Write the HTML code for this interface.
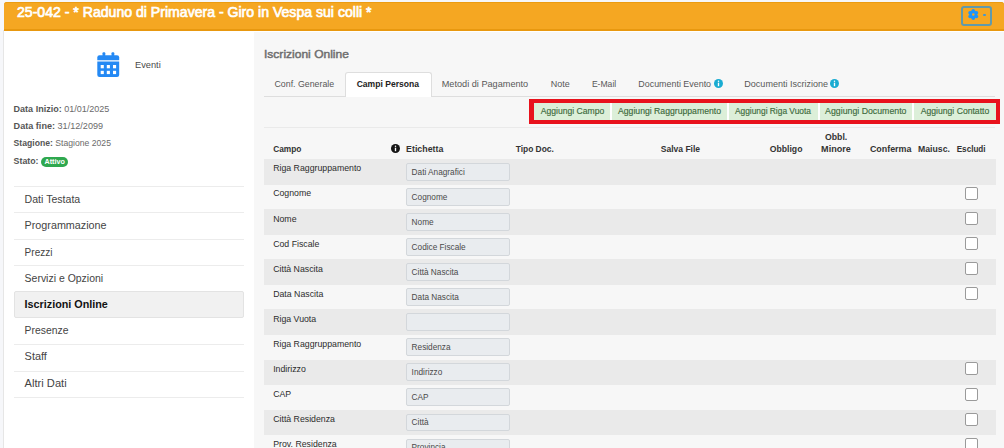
<!DOCTYPE html>
<html><head><meta charset="utf-8"><title>Iscrizioni Online</title>
<style>
html,body{margin:0;padding:0;}
body{width:1004px;height:448px;overflow:hidden;position:relative;background:#f6f7fa;font-family:"Liberation Sans",sans-serif;}
.t{position:absolute;white-space:nowrap;line-height:1;}
b{font-weight:bold;}
</style></head><body>
<div style="position:absolute;left:4px;top:2px;width:1000px;height:28px;background:#f5a722;border-radius:3px 3px 0 0;box-shadow:inset 0 1px 0 #eb9c12;"></div>
<div style="position:absolute;left:4px;top:29px;width:1000px;height:1.5px;background:#e8980f;"></div>
<div style="position:absolute;left:3px;top:30px;width:1px;height:418px;background:#e6e6e6;"></div>
<div style="position:absolute;left:4px;top:30.5px;width:250px;height:418px;background:#fff;"></div>
<div style="position:absolute;left:254px;top:30.5px;width:750px;height:2px;background:#fff;"></div>
<div style="position:absolute;left:254px;top:32px;width:750px;height:416px;background:#f7f7f7;"></div>
<div class="t" style="left:16.60px;top:5.00px;font-size:14.30px;color:#fff;-webkit-text-stroke:0.7px #fff;transform:scaleX(0.9849);transform-origin:0 0;">25-042 - * Raduno di Primavera - Giro in Vespa sui colli *</div>
<div style="position:absolute;left:961px;top:6px;width:31px;height:20px;border:2px solid #609aab;border-radius:3px;box-sizing:border-box"></div>
<svg style="position:absolute;left:966px;top:8px" width="16" height="14" viewBox="0 0 16 14">
<g transform="translate(7.25,6.5)" fill="#2095f8">
<circle r="4"/>
<circle cx="0" cy="-3.75" r="1.75"/>
<circle cx="0" cy="3.75" r="1.75"/>
<circle cx="3.25" cy="-1.875" r="1.75"/>
<circle cx="-3.25" cy="-1.875" r="1.75"/>
<circle cx="3.25" cy="1.875" r="1.75"/>
<circle cx="-3.25" cy="1.875" r="1.75"/>
</g>
<circle cx="7.25" cy="6.5" r="1.25" fill="#f5a722"/>
</svg>
<div style="position:absolute;left:983px;top:13.5px;width:3px;height:2px;background:#3d97da;border-radius:1.5px"></div>
<svg style="position:absolute;left:97px;top:52px" width="23" height="26" viewBox="0 0 23 26">
<g fill="#2489f4">
<rect x="5.5" y="0.2" width="2.8" height="4" rx="1"/>
<rect x="14.5" y="0.2" width="2.8" height="4" rx="1"/>
<path d="M0.3 5.5 Q0.3 3.2 2.5 3.2 H20 Q22.2 3.2 22.2 5.5 V8.2 H0.3 Z"/>
<path d="M0.3 9.4 H22.2 V23 Q22.2 25 20 25 H2.5 Q0.3 25 0.3 23 Z"/>
</g>
<g fill="#fff">
<rect x="3.7" y="13" width="3.1" height="3.3"/>
<rect x="9.8" y="13" width="3.1" height="3.3"/>
<rect x="16" y="13" width="3.1" height="3.3"/>
<rect x="3.7" y="18.8" width="3.1" height="3.3"/>
<rect x="9.8" y="18.8" width="3.1" height="3.3"/>
<rect x="16" y="18.8" width="3.1" height="3.3"/>
</g>
</svg>
<div class="t" style="left:135.00px;top:61.00px;font-size:9.28px;color:#4a4a4a;">Eventi</div>
<div class="t" style="left:13.60px;top:105.01px;font-size:9.03px;color:#6b6b6b"><b style="color:#555">Data Inizio: </b>01/01/2025</div>
<div class="t" style="left:13.60px;top:122.01px;font-size:9.10px;color:#6b6b6b"><b style="color:#555">Data fine: </b>31/12/2099</div>
<div class="t" style="left:13.60px;top:139.00px;font-size:8.64px;color:#6b6b6b"><b style="color:#555">Stagione: </b>Stagione 2025</div>
<div class="t" style="left:13.60px;top:157.00px;font-size:8.79px;color:#555;font-weight:bold;">Stato:</div>
<div style="position:absolute;left:41px;top:157.4px;width:26.8px;height:9.4px;background:#2fa84f;border-radius:5px;"></div>
<div class="t" style="left:44.50px;top:159.00px;font-size:7.17px;color:#fff;font-weight:bold;">Attivo</div>
<div style="position:absolute;left:14px;top:185.5px;width:230px;height:1px;background:#ececec;"></div>
<div style="position:absolute;left:14px;top:211.5px;width:230px;height:1px;background:#ececec;"></div>
<div style="position:absolute;left:14px;top:238.5px;width:230px;height:1px;background:#ececec;"></div>
<div style="position:absolute;left:14px;top:264.5px;width:230px;height:1px;background:#ececec;"></div>
<div style="position:absolute;left:13.5px;top:291px;width:230.5px;height:27px;background:#f1f1f1;border:1px solid #e3e3e3;border-radius:2px;box-sizing:border-box;"></div>
<div style="position:absolute;left:14px;top:343.5px;width:230px;height:1px;background:#ececec;"></div>
<div style="position:absolute;left:14px;top:370.5px;width:230px;height:1px;background:#ececec;"></div>
<div style="position:absolute;left:14px;top:396.5px;width:230px;height:1px;background:#ececec;"></div>
<div class="t" style="left:24.60px;top:194.00px;font-size:10.58px;color:#444;">Dati Testata</div>
<div class="t" style="left:24.60px;top:220.00px;font-size:10.78px;color:#444;">Programmazione</div>
<div class="t" style="left:24.60px;top:248.01px;font-size:10.04px;color:#444;">Prezzi</div>
<div class="t" style="left:24.60px;top:274.01px;font-size:10.47px;color:#444;">Servizi e Opzioni</div>
<div class="t" style="left:24.60px;top:299.01px;font-size:10.79px;color:#111;font-weight:bold;">Iscrizioni Online</div>
<div class="t" style="left:24.60px;top:326.01px;font-size:10.39px;color:#444;">Presenze</div>
<div class="t" style="left:24.60px;top:351.01px;font-size:10.94px;color:#444;">Staff</div>
<div class="t" style="left:24.60px;top:378.00px;font-size:11.14px;color:#444;">Altri Dati</div>
<div class="t" style="left:264.40px;top:49.01px;font-size:11.20px;color:#6e6e6e;-webkit-text-stroke:0.45px #6e6e6e;transform:scaleX(1.0753);transform-origin:0 0;">Iscrizioni Online</div>
<div style="position:absolute;left:264px;top:96px;width:731px;height:1px;background:#dedede;"></div>
<div style="position:absolute;left:345px;top:72px;width:86.5px;height:25px;background:#fff;border:1px solid #dedede;border-bottom:none;border-radius:3px 3px 0 0;box-sizing:border-box;"></div>
<div class="t" style="left:274.50px;top:80.01px;font-size:8.80px;color:#575757;">Conf. Generale</div>
<div class="t" style="left:356.70px;top:80.02px;font-size:8.56px;color:#222;font-weight:bold;">Campi Persona</div>
<div class="t" style="left:441.70px;top:80.01px;font-size:9.17px;color:#575757;">Metodi di Pagamento</div>
<div class="t" style="left:550.70px;top:80.00px;font-size:8.99px;color:#575757;">Note</div>
<div class="t" style="left:591.90px;top:80.02px;font-size:8.58px;color:#575757;">E-Mail</div>
<div class="t" style="left:638.30px;top:80.00px;font-size:8.92px;color:#575757;">Documenti Evento</div>
<div class="t" style="left:744.30px;top:80.01px;font-size:9.04px;color:#575757;">Documenti Iscrizione</div>
<svg style="position:absolute;left:713.70px;top:79.00px" width="9.00" height="9.00" viewBox="-5 -5 10 10">
<circle r="5" fill="#19acd2"/><rect x="-0.75" y="-0.9" width="1.5" height="3.9" fill="#fff"/><circle cy="-2.6" r="0.85" fill="#fff"/></svg>
<svg style="position:absolute;left:830.10px;top:79.10px" width="9.00" height="9.00" viewBox="-5 -5 10 10">
<circle r="5" fill="#19acd2"/><rect x="-0.75" y="-0.9" width="1.5" height="3.9" fill="#fff"/><circle cy="-2.6" r="0.85" fill="#fff"/></svg>
<div style="position:absolute;left:529px;top:99px;width:471px;height:25px;background:#e8121c;"></div>
<div style="position:absolute;left:533.5px;top:103px;width:462px;height:17px;background:#fff;"></div>
<div style="position:absolute;left:534px;top:103px;width:76px;height:17px;background:#dcefd9;"></div>
<div class="t" style="left:540.70px;top:107.01px;font-size:8.60px;color:#3d6a3c;-webkit-text-stroke:0.15px #3d6a3c;">Aggiungi Campo</div>
<div style="position:absolute;left:612px;top:103px;width:115px;height:17px;background:#dcefd9;"></div>
<div class="t" style="left:618.00px;top:107.00px;font-size:8.67px;color:#3d6a3c;-webkit-text-stroke:0.15px #3d6a3c;">Aggiungi Raggruppamento</div>
<div style="position:absolute;left:729px;top:103px;width:89px;height:17px;background:#dcefd9;"></div>
<div class="t" style="left:734.90px;top:107.00px;font-size:8.38px;color:#3d6a3c;-webkit-text-stroke:0.15px #3d6a3c;">Aggiungi Riga Vuota</div>
<div style="position:absolute;left:820px;top:103px;width:92px;height:17px;background:#dcefd9;"></div>
<div class="t" style="left:825.10px;top:107.01px;font-size:8.77px;color:#3d6a3c;-webkit-text-stroke:0.15px #3d6a3c;">Aggiungi Documento</div>
<div style="position:absolute;left:914px;top:103px;width:81.5px;height:17px;background:#dcefd9;"></div>
<div class="t" style="left:920.70px;top:107.00px;font-size:8.65px;color:#3d6a3c;-webkit-text-stroke:0.15px #3d6a3c;">Aggiungi Contatto</div>
<div style="position:absolute;left:264px;top:126.5px;width:731px;height:1px;background:#eaeaea;"></div>
<div class="t" style="left:273.20px;top:145.02px;font-size:8.35px;color:#333;font-weight:bold;">Campo</div>
<div class="t" style="left:406.10px;top:145.00px;font-size:8.83px;color:#333;font-weight:bold;">Etichetta</div>
<div class="t" style="left:515.70px;top:145.02px;font-size:8.41px;color:#333;font-weight:bold;">Tipo Doc.</div>
<div class="t" style="left:660.70px;top:145.00px;font-size:8.56px;color:#333;font-weight:bold;">Salva File</div>
<div class="t" style="left:769.70px;top:145.00px;font-size:8.68px;color:#333;font-weight:bold;">Obbligo</div>
<div class="t" style="left:825.00px;top:133.00px;font-size:8.73px;color:#333;font-weight:bold;">Obbl.</div>
<div class="t" style="left:821.10px;top:145.00px;font-size:9.09px;color:#333;font-weight:bold;">Minore</div>
<div class="t" style="left:869.90px;top:145.01px;font-size:8.91px;color:#333;font-weight:bold;">Conferma</div>
<div class="t" style="left:918.10px;top:145.01px;font-size:8.67px;color:#333;font-weight:bold;">Maiusc.</div>
<div class="t" style="left:956.70px;top:146.01px;font-size:8.15px;color:#333;font-weight:bold;">Escludi</div>
<svg style="position:absolute;left:391.10px;top:143.90px" width="9.00" height="9.00" viewBox="-5 -5 10 10">
<circle r="5" fill="#151515"/><rect x="-0.75" y="-0.9" width="1.5" height="3.9" fill="#fff"/><circle cy="-2.6" r="0.85" fill="#fff"/></svg>
<div style="position:absolute;left:264px;top:159px;width:731.5px;height:26px;background:#eaeaea;"></div>
<div style="position:absolute;left:264px;top:208.6px;width:731.5px;height:26px;background:#eaeaea;"></div>
<div style="position:absolute;left:264px;top:259px;width:731.5px;height:26px;background:#eaeaea;"></div>
<div style="position:absolute;left:264px;top:309px;width:731.5px;height:26px;background:#eaeaea;"></div>
<div style="position:absolute;left:264px;top:359.6px;width:731.5px;height:25px;background:#eaeaea;"></div>
<div style="position:absolute;left:264px;top:410px;width:731.5px;height:25px;background:#eaeaea;"></div>
<div class="t" style="left:273.20px;top:164.01px;font-size:8.75px;color:#2c2c2c">Riga Raggruppamento</div>
<div style="position:absolute;left:406px;top:163.00px;width:103.5px;height:17.5px;background:#e9ecef;border:1px solid #d3d7db;border-radius:2px;box-sizing:border-box"></div>
<div class="t" style="left:411.60px;top:169.01px;font-size:8.25px;color:#4a4a4a">Dati Anagrafici</div>
<div class="t" style="left:273.20px;top:189.01px;font-size:8.75px;color:#2c2c2c">Cognome</div>
<div style="position:absolute;left:406px;top:188.05px;width:103.5px;height:17.5px;background:#e9ecef;border:1px solid #d3d7db;border-radius:2px;box-sizing:border-box"></div>
<div class="t" style="left:411.60px;top:194.01px;font-size:8.25px;color:#4a4a4a">Cognome</div>
<div style="position:absolute;left:965px;top:187.10px;width:13px;height:13px;background:#fff;border:1px solid #9a9a9a;border-radius:2px;box-sizing:border-box"></div>
<div class="t" style="left:273.20px;top:215.01px;font-size:8.75px;color:#2c2c2c">Nome</div>
<div style="position:absolute;left:406px;top:213.10px;width:103.5px;height:17.5px;background:#e9ecef;border:1px solid #d3d7db;border-radius:2px;box-sizing:border-box"></div>
<div class="t" style="left:411.60px;top:219.01px;font-size:8.25px;color:#4a4a4a">Nome</div>
<div style="position:absolute;left:965px;top:212.15px;width:13px;height:13px;background:#fff;border:1px solid #9a9a9a;border-radius:2px;box-sizing:border-box"></div>
<div class="t" style="left:273.20px;top:240.00px;font-size:8.75px;color:#2c2c2c">Cod Fiscale</div>
<div style="position:absolute;left:406px;top:238.15px;width:103.5px;height:17.5px;background:#e9ecef;border:1px solid #d3d7db;border-radius:2px;box-sizing:border-box"></div>
<div class="t" style="left:411.60px;top:244.00px;font-size:8.25px;color:#4a4a4a">Codice Fiscale</div>
<div style="position:absolute;left:965px;top:237.20px;width:13px;height:13px;background:#fff;border:1px solid #9a9a9a;border-radius:2px;box-sizing:border-box"></div>
<div class="t" style="left:273.20px;top:265.01px;font-size:8.75px;color:#2c2c2c">Città Nascita</div>
<div style="position:absolute;left:406px;top:263.20px;width:103.5px;height:17.5px;background:#e9ecef;border:1px solid #d3d7db;border-radius:2px;box-sizing:border-box"></div>
<div class="t" style="left:411.60px;top:269.00px;font-size:8.25px;color:#4a4a4a">Città Nascita</div>
<div style="position:absolute;left:965px;top:262.25px;width:13px;height:13px;background:#fff;border:1px solid #9a9a9a;border-radius:2px;box-sizing:border-box"></div>
<div class="t" style="left:273.20px;top:290.01px;font-size:8.75px;color:#2c2c2c">Data Nascita</div>
<div style="position:absolute;left:406px;top:288.25px;width:103.5px;height:17.5px;background:#e9ecef;border:1px solid #d3d7db;border-radius:2px;box-sizing:border-box"></div>
<div class="t" style="left:411.60px;top:294.01px;font-size:8.25px;color:#4a4a4a">Data Nascita</div>
<div style="position:absolute;left:965px;top:287.30px;width:13px;height:13px;background:#fff;border:1px solid #9a9a9a;border-radius:2px;box-sizing:border-box"></div>
<div class="t" style="left:273.20px;top:315.01px;font-size:8.75px;color:#2c2c2c">Riga Vuota</div>
<div style="position:absolute;left:406px;top:313.30px;width:103.5px;height:17.5px;background:#e9ecef;border:1px solid #d3d7db;border-radius:2px;box-sizing:border-box"></div>
<div class="t" style="left:273.20px;top:340.01px;font-size:8.75px;color:#2c2c2c">Riga Raggruppamento</div>
<div style="position:absolute;left:406px;top:338.35px;width:103.5px;height:17.5px;background:#e9ecef;border:1px solid #d3d7db;border-radius:2px;box-sizing:border-box"></div>
<div class="t" style="left:411.60px;top:344.01px;font-size:8.25px;color:#4a4a4a">Residenza</div>
<div class="t" style="left:273.20px;top:365.00px;font-size:8.75px;color:#2c2c2c">Indirizzo</div>
<div style="position:absolute;left:406px;top:363.40px;width:103.5px;height:17.5px;background:#e9ecef;border:1px solid #d3d7db;border-radius:2px;box-sizing:border-box"></div>
<div class="t" style="left:411.60px;top:369.00px;font-size:8.25px;color:#4a4a4a">Indirizzo</div>
<div style="position:absolute;left:965px;top:362.45px;width:13px;height:13px;background:#fff;border:1px solid #9a9a9a;border-radius:2px;box-sizing:border-box"></div>
<div class="t" style="left:273.20px;top:390.01px;font-size:8.75px;color:#2c2c2c">CAP</div>
<div style="position:absolute;left:406px;top:388.45px;width:103.5px;height:17.5px;background:#e9ecef;border:1px solid #d3d7db;border-radius:2px;box-sizing:border-box"></div>
<div class="t" style="left:411.60px;top:394.00px;font-size:8.25px;color:#4a4a4a">CAP</div>
<div style="position:absolute;left:965px;top:387.50px;width:13px;height:13px;background:#fff;border:1px solid #9a9a9a;border-radius:2px;box-sizing:border-box"></div>
<div class="t" style="left:273.20px;top:415.01px;font-size:8.75px;color:#2c2c2c">Città Residenza</div>
<div style="position:absolute;left:406px;top:413.50px;width:103.5px;height:17.5px;background:#e9ecef;border:1px solid #d3d7db;border-radius:2px;box-sizing:border-box"></div>
<div class="t" style="left:411.60px;top:419.01px;font-size:8.25px;color:#4a4a4a">Città</div>
<div style="position:absolute;left:965px;top:412.55px;width:13px;height:13px;background:#fff;border:1px solid #9a9a9a;border-radius:2px;box-sizing:border-box"></div>
<div class="t" style="left:273.20px;top:440.01px;font-size:8.75px;color:#2c2c2c">Prov. Residenza</div>
<div style="position:absolute;left:406px;top:438.55px;width:103.5px;height:17.5px;background:#e9ecef;border:1px solid #d3d7db;border-radius:2px;box-sizing:border-box"></div>
<div class="t" style="left:411.60px;top:444.01px;font-size:8.25px;color:#4a4a4a">Provincia</div>
<div style="position:absolute;left:965px;top:437.60px;width:13px;height:13px;background:#fff;border:1px solid #9a9a9a;border-radius:2px;box-sizing:border-box"></div>
</body></html>
